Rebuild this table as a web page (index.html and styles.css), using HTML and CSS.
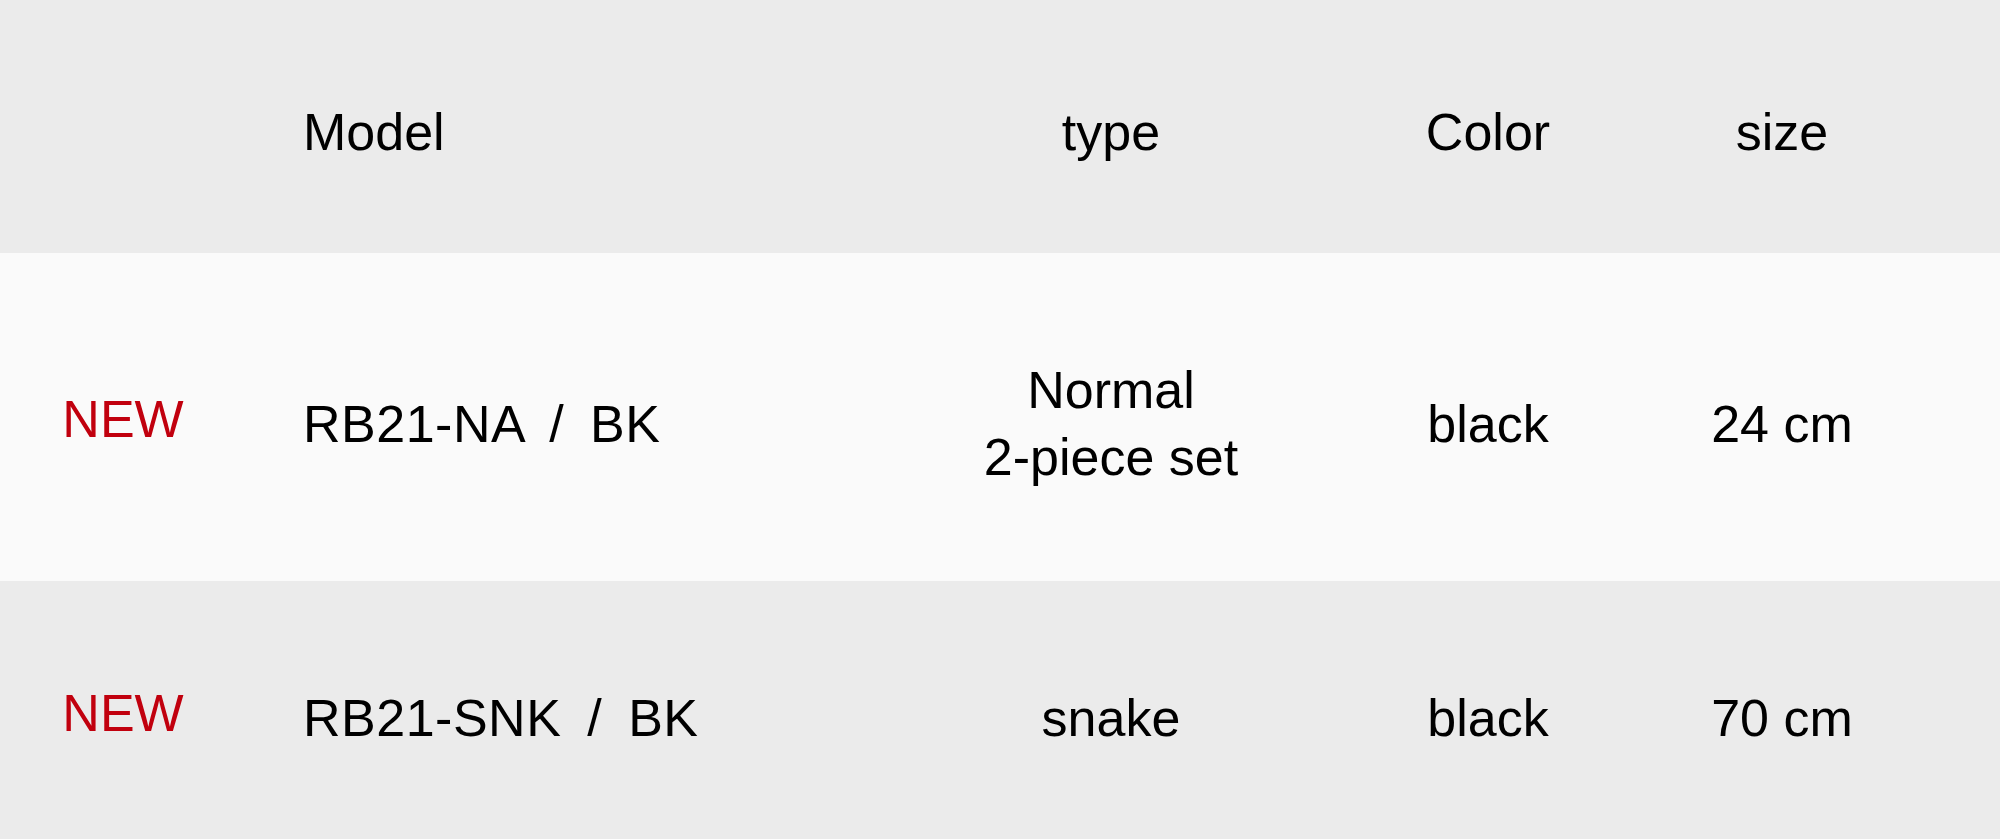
FILE: index.html
```html
<!DOCTYPE html>
<html lang="en">
<head>
<meta charset="utf-8">
<title>Lineup</title>
<link rel="stylesheet" href="styles.css">
</head>
<body>
<table class="spec">
  <colgroup>
    <col class="c-badge">
    <col class="c-model">
    <col class="c-type">
    <col class="c-color">
    <col class="c-size">
    <col class="c-rest">
  </colgroup>
  <thead>
    <tr class="head">
      <th class="badge"></th>
      <th class="model">Model</th>
      <th class="mid">type</th>
      <th class="mid">Color</th>
      <th class="mid">size</th>
      <th></th>
    </tr>
  </thead>
  <tbody>
    <tr class="row light">
      <td class="badge"><span class="new">NEW</span></td>
      <td class="model code">RB21-NA / BK</td>
      <td class="mid">Normal<br>2-piece set</td>
      <td class="mid">black</td>
      <td class="mid">24 cm</td>
      <td></td>
    </tr>
    <tr class="row grey">
      <td class="badge"><span class="new">NEW</span></td>
      <td class="model code">RB21-SNK / BK</td>
      <td class="mid">snake</td>
      <td class="mid">black</td>
      <td class="mid">70 cm</td>
      <td></td>
    </tr>
  </tbody>
</table>
</body>
</html>
```

FILE: styles.css
```css
html, body {
  margin: 0;
  padding: 0;
  background: #ebebeb;
}

.spec {
  width: 2000px;
  border-collapse: collapse;
  table-layout: fixed;
  font-family: "Liberation Sans", Arial, sans-serif;
  font-size: 52px;
  line-height: 67px;
  color: #000;
}

.c-badge { width: 246px; }
.c-model { width: 654px; }
.c-type  { width: 422px; }
.c-color { width: 332px; }
.c-size  { width: 256px; }

.spec th,
.spec td {
  font-weight: normal;
  vertical-align: middle;
  padding: 0;
}

.head th {
  background: #ebebeb;
  padding-top: 99px;
  padding-bottom: 87px;
}

.row td {
  padding-top: 104px;
  padding-bottom: 90px;
}

.row.light td { background: #fafafa; }
.row.grey td  { background: #ebebeb; }

.badge { text-align: center; }

.model {
  text-align: left;
  padding-left: 57px !important;
}

.code {
  word-spacing: 11px;
  letter-spacing: 0.5px;
}

.mid { text-align: center; }

.new {
  color: #c1000e;
  position: relative;
  top: -5px;
}
```
